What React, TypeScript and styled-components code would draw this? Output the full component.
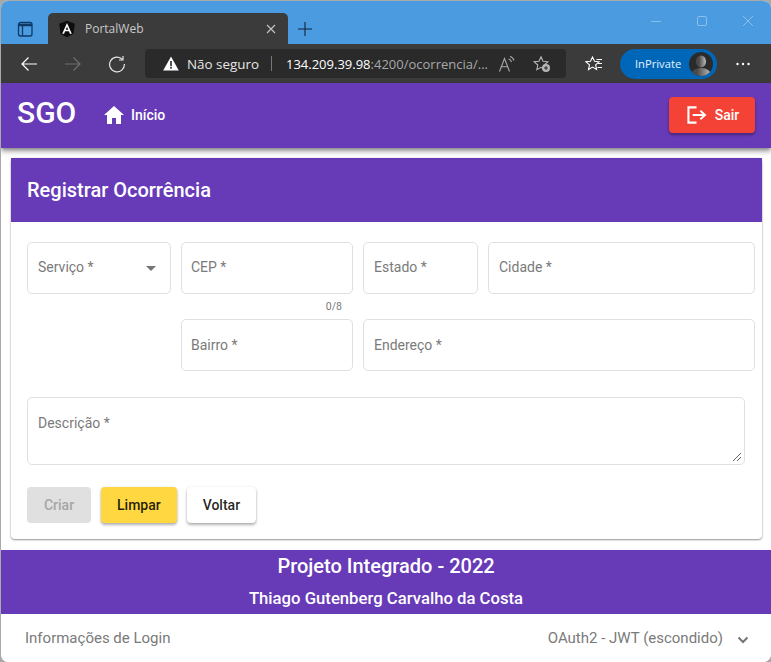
import React from 'react';
import styled, { createGlobalStyle } from 'styled-components';

const PURPLE = '#673ab7';

const GlobalStyle = createGlobalStyle`
  html, body {
    margin: 0;
    padding: 0;
    width: 771px;
    height: 662px;
    overflow: hidden;
    background: #a9a9a9;
  }
  * { box-sizing: border-box; }
`;

const Window = styled.div`
  width: 771px;
  height: 662px;
  overflow: hidden;
  display: flex;
  flex-direction: column;
  border-top: 1px solid #a9a9a9;
  border-left: 1px solid #a9a9a9;
  border-radius: 8px 8px 8px 8px;
  background: #fff;
  font-family: Roboto, sans-serif;
`;

const TitleBar = styled.div`
  height: 43px;
  flex: none;
  background: #4a9be0;
  display: flex;
  align-items: flex-end;
  padding-left: 14px;
`;

const TabToggle = styled.svg`
  width: 18px;
  height: 18px;
  margin-right: 15px;
  margin-bottom: 5px;
  flex: none;
`;

const Tab = styled.div`
  width: 240px;
  height: 31px;
  background: #3b3b3b;
  border-radius: 5px 5px 0 0;
  display: flex;
  align-items: center;
  padding: 0 12px 0 11px;
  color: #c9c9c9;
  font: 12px 'Open Sans', sans-serif;
`;

const TabTitle = styled.span`
  margin-left: 10px;
  flex: 1;
`;

const NewTab = styled.svg`
  width: 16px;
  height: 16px;
  margin: 0 0 7px 9px;
`;

const WindowControls = styled.div`
  margin-left: auto;
  align-self: flex-start;
  display: flex;
  align-items: center;
  gap: 34px;
  padding: 14px 17px 0 0;
`;

const ToolBar = styled.div`
  height: 39px;
  flex: none;
  background: #3b3b3b;
  display: flex;
  align-items: center;
  padding-left: 19px;
  color: #fff;
  font: 13px 'Open Sans', sans-serif;
`;

const NavIcon = styled.svg`
  width: 18px;
  height: 18px;
  margin-right: 26px;
  flex: none;
`;

const AddressBar = styled.div`
  width: 421px;
  height: 29px;
  margin-left: -7px;
  background: #2a2a2a;
  border-radius: 4px;
  display: flex;
  align-items: center;
  padding-left: 18px;
  flex: none;
`;

const NotSecure = styled.span`
  margin-left: 8px;
  color: #e6e6e6;
  font-size: 13.4px;
`;

const Divider = styled.span`
  width: 1px;
  height: 15px;
  background: #777;
  margin: 0 14px 0 12px;
`;

const Url = styled.span`
  color: #fff;
  font-size: 13px;
  width: 205px;
  white-space: nowrap;
`;

const UrlRest = styled.span`
  color: #a8a8a8;
`;

const SmallIcon = styled.svg<{ $gap: number }>`
  width: 18px;
  height: 18px;
  flex: none;
  margin-left: ${(p) => p.$gap}px;
`;

const PrivatePill = styled.div`
  width: 97px;
  height: 30px;
  margin-left: 17px;
  background: #0067b8;
  border-radius: 15px;
  display: flex;
  align-items: center;
  padding: 0 4px 0 15px;
  justify-content: space-between;
  font-size: 11.2px;
  color: #e8f2fb;
`;

const Avatar = styled.svg`
  width: 24px;
  height: 24px;
`;

const More = styled.svg`
  width: 16px;
  height: 16px;
  margin-left: 18px;
`;

const Page = styled.div`
  flex: 1;
  min-height: 0;
  display: flex;
  flex-direction: column;
  background: #fff;
  color: #fff;
`;

const Header = styled.header`
  height: 65px;
  flex: none;
  background: ${PURPLE};
  display: flex;
  align-items: center;
  padding: 0 16px;
  box-shadow: 0 2px 4px -1px rgba(0, 0, 0, 0.4), 0 4px 5px rgba(0, 0, 0, 0.25);
  position: relative;
`;

const Brand = styled.div`
  font-size: 30px;
  font-weight: 500;
  margin-top: -7px;
  width: 87px;
`;

const HomeLink = styled.div`
  display: flex;
  align-items: center;
  gap: 7px;
  font-size: 14px;
  font-weight: 500;
  margin-top: -2px;
`;

const LogoutButton = styled.button`
  margin-left: auto;
  width: 86px;
  height: 36px;
  margin-top: -1px;
  border: 0;
  padding: 0 0 0 2px;
  border-radius: 4px;
  background: #f44336;
  color: #fff;
  font: 500 14px Roboto, sans-serif;
  display: flex;
  align-items: center;
  justify-content: center;
  gap: 8px;
  box-shadow: 0 2px 3px rgba(0, 0, 0, 0.35);
`;

const Main = styled.main`
  padding: 10px 9px 11px 10px;
  flex: none;
`;

const Card = styled.section`
  height: 381px;
  border-radius: 4px;
  background: #fff;
  box-shadow: 0 1px 2px rgba(0, 0, 0, 0.4), 0 0 2px rgba(0, 0, 0, 0.12);
`;

const CardTitle = styled.h1`
  margin: 0;
  height: 64px;
  background: ${PURPLE};
  display: flex;
  align-items: center;
  padding-left: 16px;
  font-size: 20px;
  font-weight: 500;
  padding-bottom: 1px;
`;

const CardBody = styled.div`
  padding: 20px 16px 16px;
`;

const FieldGrid = styled.div`
  display: grid;
  grid-template-columns: 144px 172px 115px 267px;
  column-gap: 10px;
`;

const FieldCell = styled.div<{ $col?: string }>`
  grid-column: ${(p) => p.$col || 'auto'};
  height: 77px;
`;

const Field = styled.div<{ $low?: boolean; $inset?: number }>`
  height: 52px;
  border: 1px solid #e0e0e0;
  border-radius: 5px;
  padding: 0 10px ${(p) => (p.$low ? 0 : 2)}px ${(p) => p.$inset ?? 10}px;
  display: flex;
  align-items: center;
  justify-content: space-between;
  color: #7a7a7a;
  font-size: 14px;
`;

const Hint = styled.div`
  text-align: right;
  padding: 6px 11px 0 0;
  font-size: 10.5px;
  color: #7a7a7a;
  line-height: 14px;
`;

const Caret = styled.span`
  width: 0;
  height: 0;
  border-left: 5px solid transparent;
  border-right: 5px solid transparent;
  border-top: 5px solid #757575;
  margin-right: 4px;
  margin-top: 2px;
`;

const TextArea = styled.div`
  width: 718px;
  height: 68px;
  margin-top: 1px;
  border: 1px solid #e0e0e0;
  border-radius: 5px;
  padding: 17px 10px;
  color: #7a7a7a;
  font-size: 14px;
  line-height: 16px;
  position: relative;
`;

const Grip = styled.svg`
  position: absolute;
  right: 1px;
  bottom: 1px;
  width: 12px;
  height: 12px;
`;

const Actions = styled.div`
  display: flex;
  gap: 10px;
  margin-top: 22px;
`;

const ActionButton = styled.button<{ $variant: 'disabled' | 'accent' | 'plain' }>`
  height: 36px;
  min-width: 64px;
  padding: 0 16px;
  border: 0;
  border-radius: 4px;
  font: 500 14px Roboto, sans-serif;
  background: ${(p) => (p.$variant === 'disabled' ? '#e0e0e0' : p.$variant === 'accent' ? '#ffd740' : '#fff')};
  color: ${(p) => (p.$variant === 'disabled' ? '#a6a6a6' : 'rgba(0, 0, 0, 0.87)')};
  box-shadow: ${(p) => (p.$variant === 'disabled' ? 'none' : '0 2px 3px rgba(0, 0, 0, 0.3), 0 0 2px rgba(0, 0, 0, 0.1)')};
`;

const Footer = styled.footer`
  height: 64px;
  flex: none;
  background: ${PURPLE};
  display: flex;
  flex-direction: column;
  align-items: center;
  font-weight: 500;
`;

const FooterTitle = styled.div`
  font-size: 20px;
  line-height: 23px;
  margin-top: 5px;
`;

const FooterAuthor = styled.div`
  font-size: 16.7px;
  line-height: 20px;
  margin-top: 11px;
`;

const Panel = styled.div`
  flex: 1;
  display: flex;
  align-items: center;
  padding: 0 24px 0;
  color: #7a7a7a;
  font-size: 15px;
  justify-content: space-between;
`;

const PanelRight = styled.div`
  display: flex;
  align-items: center;
  gap: 10px;
`;

const Chevron = styled.svg`
  width: 20px;
  height: 20px;
  margin-right: -6px;
  margin-top: 4px;
`;

export default function App() {
  return (
    <>
      <GlobalStyle />
      <Window>
        <TitleBar>
          <TabToggle viewBox="0 0 18 18" fill="none">
            <rect x="3.5" y="1.5" width="13.5" height="13.5" rx="2" stroke="#0f3a66" strokeWidth="1.3" />
            <path d="M3.5 4h13.5" stroke="#0f3a66" strokeWidth="2.6" />
            <path d="M7.5 5v10" stroke="#0f3a66" strokeWidth="1.3" />
          </TabToggle>
          <Tab>
            <svg width="16" height="18" viewBox="0 0 15 16">
              <path d="M7.5 0.3 14.8 3 13.6 12.4 7.5 15.8 1.4 12.4 0.2 3Z" fill="#0d0d0d" />
              <path d="M7.5 2.4 3 12.4h1.8l.9-2.2h3.6l.9 2.2H12ZM6.3 8.8 7.5 5.8l1.2 3Z" fill="#fff" />
            </svg>
            <TabTitle>PortalWeb</TabTitle>
            <svg width="10" height="10" viewBox="0 0 10 10">
              <path d="M1 1l8 8M9 1l-8 8" stroke="#c4c4c4" strokeWidth="1.1" />
            </svg>
          </Tab>
          <NewTab viewBox="0 0 16 16">
            <path d="M8 1v14M1 8h14" stroke="#12233a" strokeWidth="1.1" />
          </NewTab>
          <WindowControls>
            <svg width="12" height="12" viewBox="0 0 12 12">
              <path d="M1 6.5h10" stroke="#8cc0ec" strokeWidth="1" />
            </svg>
            <svg width="12" height="12" viewBox="0 0 12 12" fill="none">
              <rect x="1.5" y="1.5" width="9" height="9" rx="1.5" stroke="#8cc0ec" />
            </svg>
            <svg width="12" height="12" viewBox="0 0 12 12">
              <path d="M1 1l10 10M11 1 1 11" stroke="#8cc0ec" strokeWidth="1" />
            </svg>
          </WindowControls>
        </TitleBar>
        <ToolBar>
          <NavIcon viewBox="0 0 18 18" fill="none">
            <path d="M17 9H2M8.5 2.5 2 9l6.5 6.5" stroke="#fff" strokeWidth="1.2" />
          </NavIcon>
          <NavIcon viewBox="0 0 18 18" fill="none">
            <path d="M1 9h15M9.5 2.5 16 9l-6.5 6.5" stroke="#6e6e6e" strokeWidth="1.2" />
          </NavIcon>
          <NavIcon viewBox="0 0 18 18" fill="none">
            <path d="M14.5 4.5A7.4 7.4 0 1 0 16.4 9" stroke="#e6e6e6" strokeWidth="1.2" />
            <path d="M15 1v4h-4" stroke="#e6e6e6" strokeWidth="1.2" />
          </NavIcon>
          <AddressBar>
            <svg width="16" height="15" viewBox="0 0 16 15">
              <path d="M8 0.5 15.8 14.5H0.2Z" fill="#fff" />
              <path d="M7.2 5h1.6v5.2H7.2ZM7.2 11h1.6v1.7H7.2Z" fill="#2a2a2a" />
            </svg>
            <NotSecure>Não seguro</NotSecure>
            <Divider />
            <Url>
              134.209.39.98<UrlRest>:4200/ocorrencia/...</UrlRest>
            </Url>
            <SmallIcon $gap={7} viewBox="0 0 18 18" fill="none">
              <path d="M1.5 16.5 6.5 3.5 11.5 16.5M3.3 11.8h6.4" stroke="#a8a8a8" strokeWidth="1.1" />
              <path d="M10.5 4c1.5.3 2.5 1.3 3 3M12 1.5c2 .4 3.4 1.8 4 4" stroke="#a8a8a8" strokeWidth="1.1" />
            </SmallIcon>
            <SmallIcon $gap={17} viewBox="0 0 18 18" fill="none">
              <path d="M8 1.8 10 6.3l4.8.5-3.6 3.2 1 4.7L8 12.3 3.8 14.7l1-4.7L1.2 6.8 6 6.3Z" stroke="#b5b5b5" strokeWidth="1.1" />
              <circle cx="13" cy="13" r="4" fill="#b5b5b5" />
              <path d="M13 11v4M11 13h4" stroke="#2a2a2a" strokeWidth="1" />
            </SmallIcon>
          </AddressBar>
          <SmallIcon $gap={19} viewBox="0 0 18 18" fill="none">
            <path d="M7.5 2 9.5 6.3l4.5.5-3.4 3.1 1 4.6-4.1-2.4-4 2.4 1-4.6L1 6.8l4.5-.5Z" stroke="#fff" strokeWidth="1.1" />
            <path d="M11.5 4.5H17M13 8.5h4M12.5 12.5H17" stroke="#fff" strokeWidth="1.1" />
          </SmallIcon>
          <PrivatePill>
            InPrivate
            <Avatar viewBox="0 0 24 24">
              <defs>
                <linearGradient id="avatarShade" x1="0" y1="0" x2="1" y2="0">
                  <stop offset="0.3" stopColor="#4a4a4a" />
                  <stop offset="1" stopColor="#bdbdbd" />
                </linearGradient>
                <clipPath id="avatarClip">
                  <circle cx="12" cy="12" r="12" />
                </clipPath>
              </defs>
              <g clipPath="url(#avatarClip)">
                <rect width="24" height="24" fill="#2b2b2b" />
                <ellipse cx="12" cy="9.5" rx="5" ry="6" fill="url(#avatarShade)" />
                <path d="M2 24c0-5 4-8 10-8s10 3 10 8Z" fill="url(#avatarShade)" />
              </g>
            </Avatar>
          </PrivatePill>
          <More viewBox="0 0 16 16">
            <circle cx="2.5" cy="8" r="1.2" fill="#fff" />
            <circle cx="8" cy="8" r="1.2" fill="#fff" />
            <circle cx="13.5" cy="8" r="1.2" fill="#fff" />
          </More>
        </ToolBar>
        <Page>
          <Header>
            <Brand>SGO</Brand>
            <HomeLink>
              <svg width="20" height="18" viewBox="0 0 20 18">
                <path d="M10 0 0 9h3v9h5v-6h4v6h5V9h3Z" fill="#fff" />
              </svg>
              Início
            </HomeLink>
            <LogoutButton>
              <svg width="20" height="18" viewBox="0 0 21 18" fill="none">
                <path d="M10 1H1.5v16H10" stroke="#fff" strokeWidth="2.2" />
                <path d="M6 9h13M14 4.5 19 9l-5 4.5" stroke="#fff" strokeWidth="1.9" />
              </svg>
              Sair
            </LogoutButton>
          </Header>
          <Main>
            <Card>
              <CardTitle>Registrar Ocorrência</CardTitle>
              <CardBody>
                <FieldGrid>
                  <FieldCell>
                    <Field>
                      Serviço *<Caret />
                    </Field>
                  </FieldCell>
                  <FieldCell>
                    <Field $inset={9}>CEP *</Field>
                    <Hint>0/8</Hint>
                  </FieldCell>
                  <FieldCell>
                    <Field>Estado *</Field>
                  </FieldCell>
                  <FieldCell>
                    <Field>Cidade *</Field>
                  </FieldCell>
                  <FieldCell $col="2">
                    <Field $low $inset={9}>
                      Bairro *
                    </Field>
                  </FieldCell>
                  <FieldCell $col="3 / 5">
                    <Field $low>Endereço *</Field>
                  </FieldCell>
                </FieldGrid>
                <TextArea>
                  Descrição *
                  <Grip viewBox="0 0 12 12">
                    <path d="M2 10 10 2M6 10l4-4" stroke="#555" strokeWidth="0.9" />
                  </Grip>
                </TextArea>
                <Actions>
                  <ActionButton $variant="disabled">Criar</ActionButton>
                  <ActionButton $variant="accent">Limpar</ActionButton>
                  <ActionButton $variant="plain">Voltar</ActionButton>
                </Actions>
              </CardBody>
            </Card>
          </Main>
          <Footer>
            <FooterTitle>Projeto Integrado - 2022</FooterTitle>
            <FooterAuthor>Thiago Gutenberg Carvalho da Costa</FooterAuthor>
          </Footer>
          <Panel>
            <span>Informações de Login</span>
            <PanelRight>
              OAuth2 - JWT (escondido)
              <Chevron viewBox="0 0 20 20" fill="none">
                <path d="M5.5 7.5 10 12l4.5-4.5" stroke="#757575" strokeWidth="2" />
              </Chevron>
            </PanelRight>
          </Panel>
        </Page>
      </Window>
    </>
  );
}
